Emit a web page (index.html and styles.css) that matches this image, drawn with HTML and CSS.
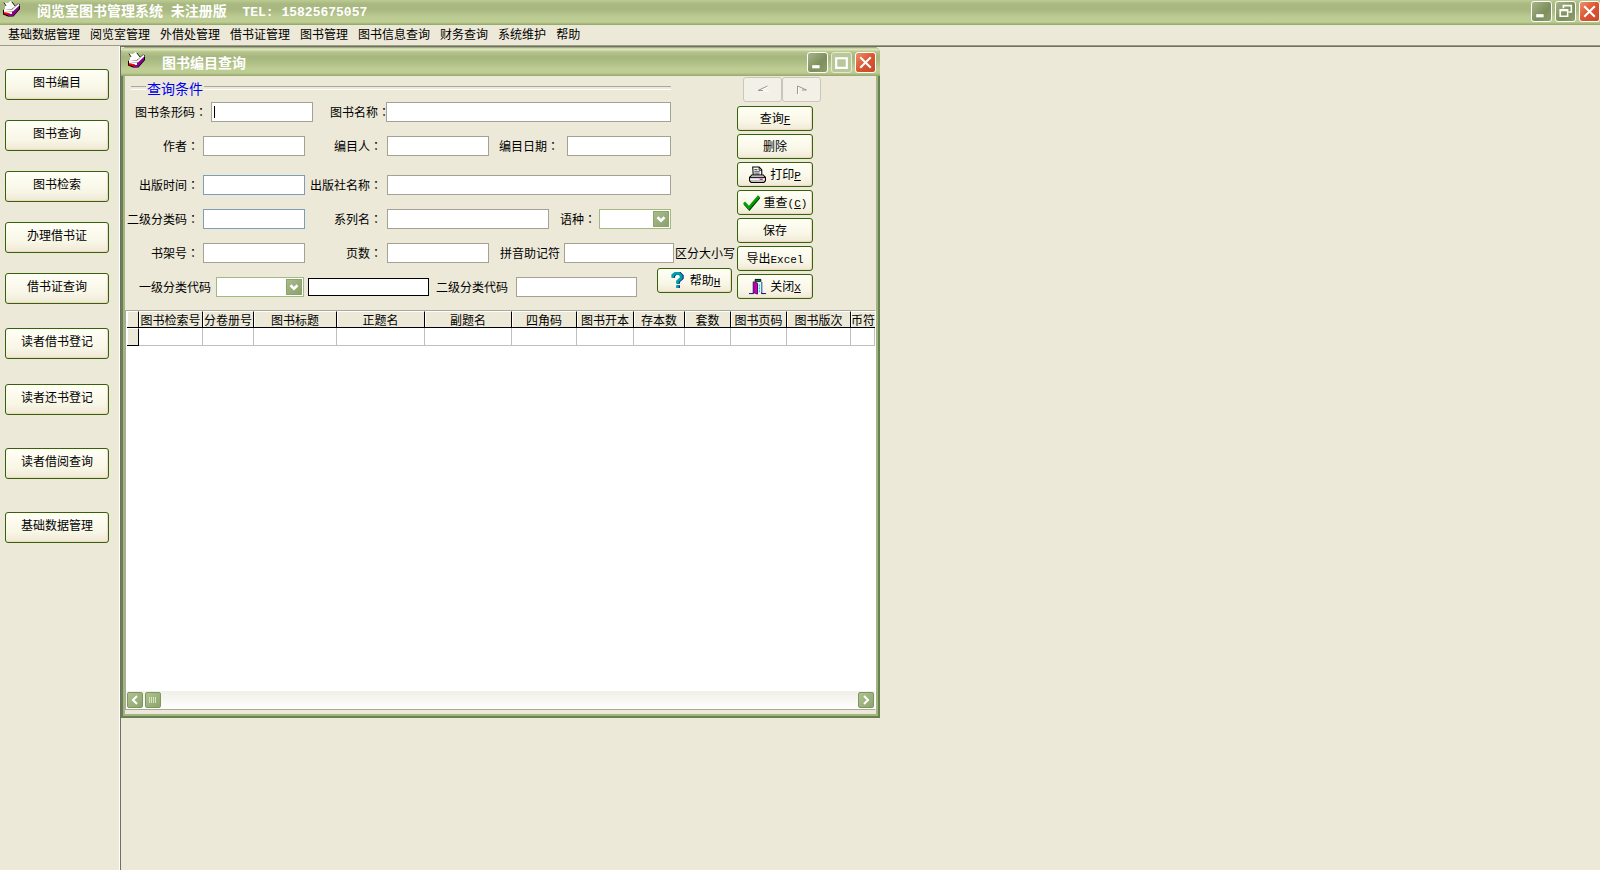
FILE: index.html
```html
<!DOCTYPE html>
<html lang="zh-CN">
<head>
<meta charset="utf-8">
<title>阅览室图书管理系统</title>
<link rel="stylesheet" href="styles.css">
</head>
<body>
<svg class="defs" aria-hidden="true">
  <symbol id="book" viewBox="0 0 17 16">
    <path d="M0 9 3 7.500 9 8 15 2.500 17 3.500V8l-6.500 7.500H5L0 13.500z" fill="#000"/>
    <path d="M9 15v-3.500L16 4.500V8l-6 7z" fill="#900090"/>
    <path d="M1 9 9.500 9.500 16 3.500" fill="none" stroke="#fff" stroke-width="2"/>
    <path d="M1 10l8 .5v2.500l-3 .5-5-1z" fill="#fff"/>
    <path d="M1 12l6 1.500" stroke="#f00" stroke-width="2"/>
    <path d="M5 14.500 10 14" stroke="#900090" stroke-width="2"/>
    <path d="M2 8V4L1 1.500 5 2l2.500-2L11 4l1 1.500L8.500 8z" fill="#fff"/>
    <path d="M1 1.500 3 5M9 1l3 4" fill="none" stroke="#222"/>
  </symbol>
  <symbol id="min" viewBox="0 0 16 16"><path d="M3 12h7" stroke="#fff" stroke-width="3"/></symbol>
  <symbol id="close" viewBox="0 0 16 16"><path d="M3 3l10 10M13 3 3 13" stroke="#fff" stroke-width="2"/></symbol>
  <symbol id="down" viewBox="0 0 16 16"><path d="M4 6l4 4 4-4" fill="none" stroke="#fff" stroke-width="3"/></symbol>
</svg>

<header class="titlebar app-title">
  <svg class="book"><use href="#book"/></svg>
  <h1 class="caption">阅览室图书管理系统<span class="latin"> </span>未注册版<span class="latin">&nbsp; TEL: 15825675057</span></h1>
  <div class="window-buttons">
    <button class="wbtn" aria-label="最小化"><svg><use href="#min"/></svg></button>
    <button class="wbtn" aria-label="还原"><svg viewBox="0 0 16 16"><path d="M6 5V2.500h7.500v6H11M3 6.500h7v6H3zM3 7h7" fill="none" stroke="#fff" stroke-width="1.500"/></svg></button>
    <button class="wbtn red" aria-label="关闭程序"><svg><use href="#close"/></svg></button>
  </div>
</header>
<nav class="menu">
  <a href="#">基础数据管理</a><a href="#">阅览室管理</a><a href="#">外借处管理</a><a href="#">借书证管理</a><a href="#">图书管理</a><a href="#">图书信息查询</a><a href="#">财务查询</a><a href="#">系统维护</a><a href="#">帮助</a>
</nav>

<div class="workspace">
  <aside class="sidebar">
    <div class="group">
      <button class="btn">图书编目</button>
      <button class="btn">图书查询</button>
      <button class="btn">图书检索</button>
      <button class="btn">办理借书证</button>
      <button class="btn">借书证查询</button>
    </div>
    <div class="group mid">
      <button class="btn">读者借书登记</button>
      <button class="btn">读者还书登记</button>
    </div>
    <div class="group wide">
      <button class="btn">读者借阅查询</button>
      <button class="btn">基础数据管理</button>
    </div>
  </aside>

  <main class="desktop">
    <section class="window">
      <header class="titlebar">
        <svg class="book"><use href="#book"/></svg>
        <h2 class="caption">图书编目查询</h2>
        <div class="window-buttons">
          <button class="wbtn" aria-label="最小化窗口"><svg><use href="#min"/></svg></button>
          <button class="wbtn off" aria-label="最大化" disabled><svg viewBox="0 0 16 16"><path d="M3 4h10M3 3v10h10V3" fill="none" stroke="#fff" stroke-width="2"/></svg></button>
          <button class="wbtn red" aria-label="关闭窗口"><svg><use href="#close"/></svg></button>
        </div>
      </header>

      <div class="panel">
        <form class="form">
          <div class="legend">查询条件</div>
          <div class="row">
            <label class="lead barcode" for="f1">图书条形码<span class="colon" lang="zh-TW">：</span></label><input id="f1" class="field caret">
            <label class="second tight" for="f2">图书名称<span class="colon" lang="zh-TW">：</span></label><input id="f2" class="field grow">
          </div>
          <div class="row">
            <label class="lead" for="f3">作者<span class="colon" lang="zh-TW">：</span></label><input id="f3" class="field">
            <label class="second" for="f4">编目人<span class="colon" lang="zh-TW">：</span></label><input id="f4" class="field">
            <label class="third" for="f5">编目日期<span class="colon" lang="zh-TW">：</span></label><input id="f5" class="field grow">
          </div>
          <div class="row spaced">
            <label class="lead" for="f6">出版时间<span class="colon" lang="zh-TW">：</span></label><input id="f6" class="field blue">
            <label class="second" for="f7">出版社名称<span class="colon" lang="zh-TW">：</span></label><input id="f7" class="field grow">
          </div>
          <div class="row">
            <label class="lead" for="f8">二级分类码<span class="colon" lang="zh-TW">：</span></label><input id="f8" class="field blue">
            <label class="second" for="f9">系列名<span class="colon" lang="zh-TW">：</span></label><input id="f9" class="field series">
            <label class="language" for="f10">语种<span class="colon" lang="zh-TW">：</span></label>
            <span class="combo grow"><select id="f10"><option></option></select><svg><use href="#down"/></svg></span>
          </div>
          <div class="row full">
            <label class="lead" for="f11">书架号<span class="colon" lang="zh-TW">：</span></label><input id="f11" class="field">
            <label class="second" for="f12">页数<span class="colon" lang="zh-TW">：</span></label><input id="f12" class="field">
            <label class="third pinyin" for="f13">拼音助记符</label><input id="f13" class="field grow">
            <span class="note">区分大小写</span>
          </div>
          <div class="row full">
            <label class="code1" for="f14">一级分类代码</label>
            <span class="combo code"><select id="f14"><option></option></select><svg><use href="#down"/></svg></span>
            <input class="field code-name" aria-label="一级分类名称">
            <label class="code2" for="f15">二级分类代码</label><input id="f15" class="field grow">
            <button type="button" class="btn help"><svg viewBox="0 0 16 18"><path d="M4 6V3.500L6.500 1.500h4L13 4v2.500L9 10v2.500M7.500 15.500h3" fill="none" stroke="#000080" stroke-width="3"/><path d="M3 6V3.500L5.500 1.500h4L12 4v2.500L8 10v2.500M6.500 15.500h3" fill="none" stroke="#00a0a8" stroke-width="3"/></svg><span>帮助<u>H</u></span></button>
          </div>
        </form>

        <div class="actions">
          <div class="pager">
            <button class="nav" aria-label="上一条" disabled><svg viewBox="0 0 12 10"><path d="M11 2 3 6h9" fill="none" stroke="#fff"/><path d="M10.500 1 1 5.500h5" fill="none" stroke="#9a978c"/></svg></button>
            <button class="nav" aria-label="下一条" disabled><svg viewBox="0 0 12 10"><path d="M2.500 10V2l9 3.500" fill="none" stroke="#fff"/><path d="M1.500 9V1l9 4H6" fill="none" stroke="#9a978c"/></svg></button>
          </div>
          <button class="btn"><span>查询<u>F</u></span></button>
          <button class="btn">删除</button>
          <button class="btn"><svg viewBox="0 0 16 16"><path d="M4 9 3.500 1h6L12 3.500V9z" fill="#fff" stroke="#000"/><path d="M5 3.500h3M5 5.500h5M5 7.500h5M9.500 1v3H12" fill="none" stroke="#000" stroke-width=".8"/><path d="M2.500 8.500 .5 11h15l-2-2.500z" fill="#fff" stroke="#000"/><path d="M.5 10.500h15V14l-1.500 1.500h-12L.5 14z" fill="#c0c0c0" stroke="#000"/><path d="M1 12.500h14" stroke="#fff"/><path d="M10 12.500h3" stroke="#e00080"/></svg><span>打印<u>P</u></span></button>
          <button class="btn"><svg viewBox="0 0 16 16"><path d="M1.500 9 6 14 15.500 3" fill="none" stroke="#003c00" stroke-width="2.500"/><path d="M1 8l4.500 5L15 2" fill="none" stroke="#00a000" stroke-width="2.500"/></svg><span>重查<span class="latin">(<u>C</u>)</span></span></button>
          <button class="btn">保存</button>
          <button class="btn"><span>导出<span class="latin">Excel</span></span></button>
          <button class="btn"><svg viewBox="0 0 18 18"><path d="M0 16.500h5M13 16.500h5" stroke="#000080"/><path d="M4.500 4v12.500M13.500 4v12.500" stroke="#000080"/><path d="M5 4.500h8V15H5z" fill="#c8ffff"/><path d="M5 4l4 1.500V17l-4-1.500z" fill="#d000b0" stroke="#600060"/><path d="M6.500 1.500h6v2h-6z" fill="#00a040" stroke="#000"/><path d="M11 7v9" stroke="#00c0d0" stroke-dasharray="2 1"/></svg><span>关闭<u>X</u></span></button>
        </div>
      </div>

      <div class="data">
        <div class="table-area">
          <table class="grid">
            <colgroup><col class="c12"><col class="c64"><col class="c51"><col class="c83"><col class="c88"><col class="c87"><col class="c65"><col class="c57"><col class="c51"><col class="c46"><col class="c56"><col class="c64"><col></colgroup>
            <thead><tr><th></th><th>图书检索号</th><th>分卷册号</th><th>图书标题</th><th>正题名</th><th>副题名</th><th>四角码</th><th>图书开本</th><th>存本数</th><th>套数</th><th>图书页码</th><th>图书版次</th><th>币符</th></tr></thead>
            <tbody><tr><th></th><td></td><td></td><td></td><td></td><td></td><td></td><td></td><td></td><td></td><td></td><td></td><td></td></tr></tbody>
          </table>
        </div>
        <div class="scrollbar">
          <button class="sbtn" aria-label="向左滚动"><svg viewBox="0 0 14 14"><path d="M9 3 5 7l4 4" fill="none" stroke="#fff" stroke-width="2"/></svg></button>
          <button class="sbtn thumb" aria-label="滚动滑块"><svg viewBox="0 0 14 14"><path d="M3.500 4v6M5.500 4v6M7.500 4v6M9.500 4v6" stroke="#dbe6c0"/></svg></button>
          <button class="sbtn last" aria-label="向右滚动"><svg viewBox="0 0 14 14"><path d="M5 3l4 4-4 4" fill="none" stroke="#fff" stroke-width="2"/></svg></button>
        </div>
      </div>
    </section>
  </main>
</div>
</body>
</html>
```

FILE: styles.css
```css
* { box-sizing: border-box; }
body {
  margin: 0;
  min-height: 100vh;
  display: flex;
  flex-direction: column;
  background: #ece9d8;
  color: #000;
  font: 12px/16px "Noto Sans CJK SC", sans-serif;
}
button, input, select { font: inherit; color: inherit; margin: 0; padding: 0; }
svg { display: block; flex: none; }
.defs { position: absolute; width: 0; height: 0; }

/* Title bars */
.titlebar {
  display: flex;
  align-items: center;
  height: 29px;
  padding: 1px 4px 0 7px;
  background: linear-gradient(#8a9c66 0, #e4ecc0 2px, #b4c48c 5px, #a5b57d 10px, #adbd84 15px, #bfce94 22px, #bccb91 26px, #93a668 29px);
}
.app-title {
  height: 25px;
  padding: 0 0 2px 3px;
  background: linear-gradient(#bccb92 0, #a8b880 4px, #a8b880 10px, #bccb91 17px, #bfce94 22px, #8fa465 25px);
}
.book { width: 17px; height: 16px; margin-bottom: 5px; }
.caption {
  margin: 0 0 0 17px;
  flex: 1;
  color: #fff;
  font: bold 14px/20px "Noto Sans CJK SC", sans-serif;
}
.caption .latin { font: bold 13px/20px "Liberation Mono", monospace; white-space: pre; }
.window-buttons { display: flex; gap: 3px; }
.wbtn {
  width: 21px;
  height: 21px;
  padding: 1px;
  border: 1px solid #fff;
  border-radius: 3px;
  background: linear-gradient(135deg, #a5b488, #7d8f5c 60%, #8e9f6b);
}
.wbtn svg { width: 17px; height: 17px; }
.wbtn.red { background: linear-gradient(135deg, #f0906c, #dc5430 50%, #c8492a); }
.wbtn.off { background: #b9c79a; border-color: #e4ebcd; }

.menu {
  display: flex;
  align-items: center;
  gap: 10px;
  height: 20px;
  padding: 0 8px 2px;
}
.menu a { color: #000; text-decoration: none; }

/* Workspace */
.workspace {
  flex: 1;
  display: flex;
  border-top: 1px solid #9d9a8c;
}
.sidebar {
  width: 120px;
  flex: none;
  padding: 23px 10px 20px 5px;
  border-right: 1px solid #fff;
}
.group { display: flex; flex-direction: column; gap: 20px; }
.group.mid { gap: 25px; margin-top: 24px; }
.group.wide { gap: 33px; margin-top: 33px; }
.desktop {
  position: relative;
  flex: 1;
  min-height: 680px;
  border-top: 1px solid #716f64;
  border-left: 1px solid #716f64;
}
.btn {
  display: flex;
  align-items: center;
  justify-content: center;
  gap: 4px;
  height: 25px;
  padding-bottom: 1px;
  border: 1px solid #37620a;
  border-radius: 3px;
  background: linear-gradient(#fffff6, #f8f6e6 65%, #f0e9d6);
  box-shadow: inset -1px -1px 1px #ecd9c4;
  white-space: nowrap;
}
.sidebar .btn { height: 31px; padding-bottom: 5px; }
.btn svg { width: 17px; height: 17px; }
.btn u, .latin { font: 11px/14px "Liberation Mono", monospace; }

.window {
  position: absolute;
  left: 0;
  top: 0;
  width: 759px;
  padding: 0 2px 2px 1px;
  border: solid #67824f;
  border-width: 0 2px 2px;
  border-radius: 6px 6px 0 0;
  background: #ece9d8;
  box-shadow: inset 0 0 0 2px #a3b582;
}
.window .titlebar { margin: 0 -4px 0 -3px; border-radius: 6px 6px 0 0; }

/* Search form */
.panel { display: flex; height: 234px; padding-left: 1px; }
.form { width: 610px; display: flex; flex-direction: column; gap: 14px; padding-top: 4px; }
.legend {
  display: flex;
  align-items: center;
  gap: 1px;
  height: 16px;
  margin: 0 64px -8px 6px;
  color: #0000f0;
  font-size: 14px;
}
.legend::before, .legend::after {
  content: "";
  width: 15px;
  height: 2px;
  border-top: 1px solid #aca899;
  border-bottom: 1px solid #fff;
}
.legend::after { flex: 1; }
.row { display: flex; align-items: center; height: 20px; padding-right: 64px; }
.row.spaced { margin-top: 5px; }
.row.full { padding-right: 0; }
.row label { flex: none; text-align: right; white-space: nowrap; }
.colon { font-family: "Noto Sans CJK TC", sans-serif; }
.lead { width: 78px; padding-right: 4px; }
.lead.barcode { width: 86px; }
.second { width: 82px; padding-right: 5px; }
.row .second.tight { width: 73px; padding: 0 0 0 17px; text-align: left; }
.third { width: 78px; padding-right: 8px; }
.third.pinyin { width: 75px; padding-right: 4px; }
.language { width: 50px; padding-right: 3px; }
.note { width: 61px; padding-left: 1px; white-space: nowrap; }
.code1 { width: 91px; padding-right: 5px; }
.code2 { width: 87px; padding-right: 8px; }
.field {
  position: relative;
  flex: none;
  width: 102px;
  height: 20px;
  border: 1px solid #a5a295;
  border-radius: 0;
  background: #fff;
}
.field.blue { border-color: #7f9db9; }
.row .grow { flex: 1; min-width: 0; width: auto; }
.field.series { width: 162px; }
.field.caret { background: linear-gradient(#000, #000) 2px 3px / 1px 12px no-repeat #fff; }
.field.code-name { width: 121px; height: 18px; margin-left: 4px; border-color: #000; }
.combo { position: relative; display: flex; height: 20px; }
.combo.code { width: 88px; }
.combo select {
  flex: 1;
  min-width: 0;
  border: 1px solid #a4b97f;
  border-radius: 0;
  background: #fff;
  appearance: none;
}
.combo svg {
  position: absolute;
  right: 2px;
  top: 2px;
  width: 16px;
  height: 16px;
  border: 1px solid #8da26c;
  background: linear-gradient(135deg, #a9bb8b, #8ba16b);
  pointer-events: none;
}
.help { width: 75px; margin: -9px 3px 4px 20px; }

/* Action column */
.actions { display: flex; flex-direction: column; gap: 3px; width: 78px; padding: 1px 0 0 2px; }
.pager { display: flex; width: 78px; margin: 0 0 1px 6px; }
.nav {
  display: grid;
  place-items: center;
  width: 39px;
  height: 25px;
  border: 1px solid #c9c7ba;
  border-radius: 3px;
  background: #f3f0e8;
}
.nav svg { width: 12px; height: 10px; }

/* Result grid */
.data {
  display: flex;
  flex-direction: column;
  height: 400px;
  margin: 0 0 4px 1px;
  border: 1px solid #aca899;
  border-right-color: #fff;
  background: #fff;
}
.table-area { flex: 1; overflow: hidden; padding-left: 1px; }
.grid { width: 100%; table-layout: fixed; border-collapse: separate; border-spacing: 0; }
.grid th {
  height: 17px;
  padding: 0;
  overflow: hidden;
  border: 1px solid #000;
  border-top-color: #fff;
  border-left: 0;
  background: #ece9d8;
  box-shadow: inset 1px 0 #fff;
  font-weight: normal;
  line-height: 15px;
  white-space: nowrap;
}
.grid td { height: 18px; padding: 0; border: solid #c0c0c0; border-width: 0 1px 1px 0; }
.grid th:last-child { border-right-width: 0; }
.c12 { width: 12px; }
.c46 { width: 46px; }
.c51 { width: 51px; }
.c56 { width: 56px; }
.c57 { width: 57px; }
.c64 { width: 64px; }
.c65 { width: 65px; }
.c83 { width: 83px; }
.c87 { width: 87px; }
.c88 { width: 88px; }
.scrollbar {
  display: flex;
  align-items: center;
  gap: 2px;
  height: 18px;
  padding: 0 1px;
  background: linear-gradient(#f0efe8, #fff);
}
.sbtn {
  width: 16px;
  height: 16px;
  border: 1px solid #7e9660;
  border-radius: 2px;
  background: linear-gradient(135deg, #b0c290, #8ba56c);
}
.sbtn svg { width: 14px; height: 14px; }
.sbtn.last { margin-left: auto; }
```
